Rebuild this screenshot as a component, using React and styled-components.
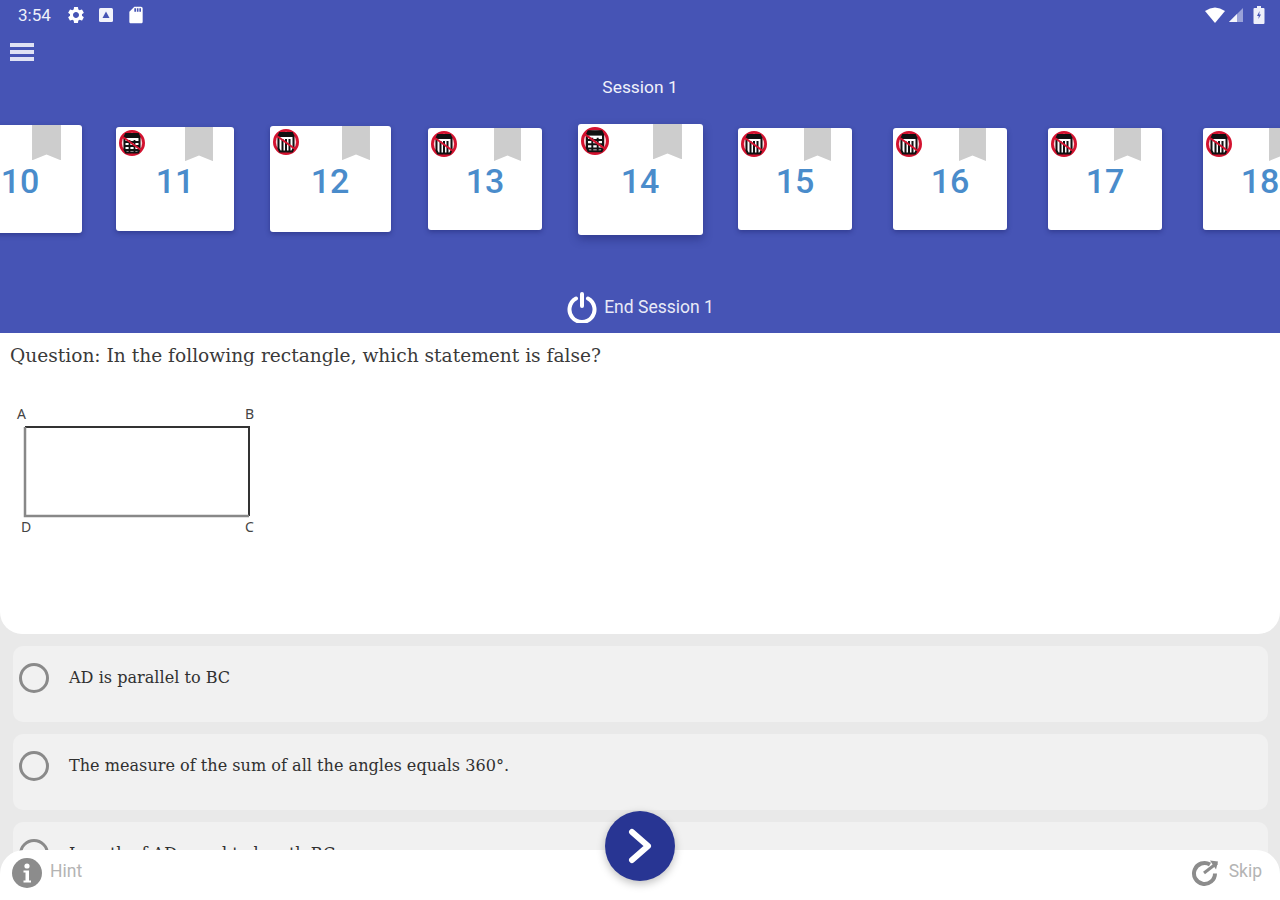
import React from "react";
import styled, { createGlobalStyle } from "styled-components";
import { MdSettings, MdSdCard } from "react-icons/md";

const GlobalStyle = createGlobalStyle`
  html, body {
    margin: 0;
    padding: 0;
    background: #e9e9e9;
    font-family: Roboto, "Liberation Sans", sans-serif;
  }
`;

const Page = styled.div`
  position: relative;
  width: 1280px;
  height: 900px;
  overflow: hidden;
  background: #e9e9e9;
`;

const Header = styled.header`
  display: flex;
  flex-direction: column;
  height: 333px;
  background: #4654b5;
  color: #fff;
`;

const StatusBar = styled.div`
  display: flex;
  align-items: center;
  height: 30px;
  padding: 0 15px 0 18px;
  font-size: 17px;
`;

const StatusTime = styled.span`
  width: 43px;
  color: #eef0fa;
`;

const StatusIcon = styled.span`
  display: flex;
  justify-content: center;
  width: 30px;
`;

const StatusRight = styled.div`
  display: flex;
  align-items: center;
  gap: 4px;
  margin-left: auto;
`;

const BatteryGap = styled.span`
  width: 2px;
`;

const MenuRow = styled.div`
  display: flex;
  align-items: center;
  height: 42px;
  padding: 2px 0 0 10px;
  box-sizing: border-box;
`;

const Hamburger = styled.button`
  display: flex;
  flex-direction: column;
  gap: 3px;
  width: 24px;
  padding: 0;
  border: 0;
  background: none;
  span {
    height: 4px;
    background: #dfe2f4;
  }
`;

const SessionTitle = styled.div`
  height: 30px;
  line-height: 30px;
  text-align: center;
  font-size: 17.4px;
  color: #f0f1fa;
`;

const Carousel = styled.div`
  display: flex;
  justify-content: center;
  align-items: center;
  height: 154px;
  overflow: hidden;
`;

const Slot = styled.div`
  flex: 0 0 155px;
  display: flex;
  justify-content: center;
  align-items: center;
`;

const Card = styled.div`
  position: relative;
  flex: none;
  display: flex;
  justify-content: center;
  align-items: center;
  width: ${(p) => p.$w}px;
  height: ${(p) => p.$h}px;
  padding-top: 4px;
  box-sizing: border-box;
  border-radius: 3px;
  background: #fff;
  box-shadow: 0 ${(p) => (p.$active ? 4 : 2)}px ${(p) => (p.$active ? 10 : 5)}px rgba(25, 32, 100, 0.45);
  color: #4a8ccb;
  font-size: 34px;
  font-weight: 500;
`;

const Bookmark = styled.svg`
  position: absolute;
  top: 0;
  right: 21px;
  width: ${(p) => p.$size}px;
  height: ${(p) => p.$size * 1.22}px;
`;

const CalcBadge = styled.svg`
  position: absolute;
  top: 3px;
  left: 3px;
  width: ${(p) => p.$size}px;
  height: ${(p) => p.$size}px;
`;

const EndSession = styled.div`
  display: flex;
  justify-content: center;
  align-items: center;
  gap: 6px;
  height: 52px;
  margin-top: 25px;
  font-size: 17.5px;
  color: #e8eaf7;
`;

const QuestionPanel = styled.section`
  height: 301px;
  padding: 9px 10px;
  box-sizing: border-box;
  background: #fff;
  border-radius: 0 0 22px 22px;
`;

const QuestionText = styled.p`
  margin: 0;
  font-family: "DejaVu Serif", "Liberation Serif", serif;
  font-size: 18.6px;
  line-height: 28px;
  color: #3a3a3a;
`;

const Diagram = styled.svg`
  display: block;
  width: 260px;
  height: 145px;
  margin-top: 33px;
  font-family: "Noto Sans", sans-serif;
  font-size: 14px;
  fill: #444;
`;

const Options = styled.div`
  display: flex;
  flex-direction: column;
  gap: 12px;
  padding: 12px 12px 0 13px;
`;

const Option = styled.label`
  display: flex;
  align-items: flex-start;
  flex: none;
  gap: 20px;
  height: 76px;
  padding: 17px 0 0 6px;
  box-sizing: border-box;
  border-radius: 10px;
  background: #f1f1f1;
  font-family: "DejaVu Serif", "Liberation Serif", serif;
  font-size: 16.1px;
  line-height: 30px;
  color: #303030;
`;

const Radio = styled.span`
  flex: none;
  width: 30px;
  height: 30px;
  box-sizing: border-box;
  border: 3px solid #8a8a8a;
  border-radius: 50%;
`;

const Footer = styled.footer`
  position: absolute;
  left: 0;
  right: 0;
  bottom: 0;
  display: flex;
  justify-content: space-between;
  align-items: center;
  height: 50px;
  padding: 0 18px 4px 12px;
  box-sizing: border-box;
  background: #fff;
  border-radius: 24px 24px 0 0;
`;

const FooterAction = styled.div`
  display: flex;
  align-items: center;
  gap: ${(p) => p.$gap}px;
  font-size: 17.5px;
  color: #b4b4b4;
`;

const FooterLabel = styled.span`
  margin-top: -4px;
`;

const NextButton = styled.button`
  position: absolute;
  left: 605px;
  top: 811px;
  display: flex;
  justify-content: center;
  align-items: center;
  width: 70px;
  height: 70px;
  padding: 0;
  border: 0;
  border-radius: 50%;
  background: #283593;
  color: #fff;
  box-shadow: 0 3px 8px rgba(0, 0, 0, 0.25);
`;

const cards = [
  { n: 10, w: 124, h: 108 },
  { n: 11, w: 118, h: 104, calc: "grid" },
  { n: 12, w: 121, h: 106, calc: "bars" },
  { n: 13, w: 114, h: 102, calc: "bars" },
  { n: 14, w: 125, h: 111, calc: "grid", active: true },
  { n: 15, w: 114, h: 102, calc: "bars" },
  { n: 16, w: 114, h: 102, calc: "bars" },
  { n: 17, w: 114, h: 102, calc: "bars" },
  { n: 18, w: 114, h: 102, calc: "bars" },
];

const options = [
  "AD is parallel to BC",
  "The measure of the sum of all the angles equals 360°.",
  "Length of AD equal to length BC",
];

const NoCalculator = ({ size, kind }) => (
  <CalcBadge $size={size} viewBox="0 0 26 26">
    <circle cx="13" cy="13" r="11.6" fill="#f8d5da" stroke="#d3122f" strokeWidth="2.8" />
    <path d="M7 4h12l1.5 3v12.5L19 22.5H7l-1.5-3V7z" fill="#fff" stroke="#111" strokeWidth="2" />
    <rect x="6" y="4" width="14" height="4" fill="#111" />
    {kind === "bars" ? (
      <path d="M9.5 10v12M13 10v12M16.5 10v12" stroke="#111" strokeWidth="2" />
    ) : (
      <path d="M6 12h14M6 16h14M6 20h14M10.5 10v12M15.5 10v12" stroke="#111" strokeWidth="1.8" />
    )}
    <path d="M4 7l18 13" stroke="#d3122f" strokeWidth="2" />
  </CalcBadge>
);

const DriveIcon = () => (
  <svg width="14" height="14" viewBox="0 0 14 14">
    <rect width="14" height="14" rx="1.5" fill="#f2f3fb" />
    <path d="M7 3.5L10.5 10h-7z" fill="#4654b5" />
  </svg>
);

const WifiIcon = () => (
  <svg width="20" height="16" viewBox="0 0 20 16">
    <path d="M0 4 Q10 -3 20 4 L10 16 Z" fill="#fff" />
  </svg>
);

const SignalIcon = () => (
  <svg width="14" height="14" viewBox="0 0 14 14">
    <path d="M14 0V14H0Z" fill="#9aa2d8" />
    <path d="M8 6V14H0Z" fill="#f4f5fb" />
  </svg>
);

const BatteryIcon = () => (
  <svg width="12" height="18" viewBox="0 0 12 18">
    <path d="M4 0h4v2h2.5a1 1 0 0 1 1 1v14a1 1 0 0 1-1 1h-9a1 1 0 0 1-1-1V3a1 1 0 0 1 1-1H4z" fill="#eef0fa" />
    <path d="M6.6 5L4 10h1.8l-.4 3L8 8.5H6.2z" fill="#4654b5" />
  </svg>
);

const PowerIcon = () => (
  <svg width="32" height="32" viewBox="0 0 32 32" fill="none" stroke="#fff" strokeWidth="4" strokeLinecap="round">
    <path d="M10 7.5a12.5 12.5 0 1 0 12 0" />
    <path d="M16 3v12" />
  </svg>
);

const HintIcon = () => (
  <svg width="30" height="30" viewBox="0 0 30 30">
    <circle cx="15" cy="15" r="15" fill="#8c8c8c" />
    <circle cx="15" cy="8" r="2.6" fill="#fff" />
    <path d="M11.5 12.5h5.5v10h2v2h-7.5v-2h2v-8h-2z" fill="#fff" />
  </svg>
);

const SkipIcon = () => (
  <svg width="30" height="30" viewBox="0 0 30 30" fill="none" stroke="#8c8c8c" strokeWidth="4">
    <path d="M19 6.5a10.5 10.5 0 1 0 5 9" />
    <path d="M13 15l13-10" strokeWidth="3" />
    <path d="M19 2.5l8 1-2 8z" fill="#8c8c8c" stroke="none" />
  </svg>
);

const ChevronIcon = () => (
  <svg width="28" height="36" viewBox="0 0 28 36" fill="none" stroke="#fff" strokeWidth="6" strokeLinecap="round" strokeLinejoin="round">
    <path d="M6 4l16 14L6 32" />
  </svg>
);

const App = () => (
  <Page>
    <GlobalStyle />
    <Header>
      <StatusBar>
        <StatusTime>3:54</StatusTime>
        <StatusIcon>
          <MdSettings size={20} color="#fff" />
        </StatusIcon>
        <StatusIcon>
          <DriveIcon />
        </StatusIcon>
        <StatusIcon>
          <MdSdCard size={20} color="#fff" />
        </StatusIcon>
        <StatusRight>
          <WifiIcon />
          <SignalIcon />
          <BatteryGap />
          <BatteryIcon />
        </StatusRight>
      </StatusBar>
      <MenuRow>
        <Hamburger aria-label="menu">
          <span />
          <span />
          <span />
        </Hamburger>
      </MenuRow>
      <SessionTitle>Session 1</SessionTitle>
      <Carousel>
        {cards.map((c) => (
          <Slot key={c.n}>
            <Card $w={c.w} $h={c.h} $active={c.active}>
              {c.calc && <NoCalculator size={c.active ? 28 : 26} kind={c.calc} />}
              <Bookmark $size={Math.round(c.w * 0.235)} viewBox="0 0 27 33">
                <path d="M0 0H27V33L13.5 27.5L0 33Z" fill="#cdcdcd" />
              </Bookmark>
              {c.n}
            </Card>
          </Slot>
        ))}
      </Carousel>
      <EndSession>
        <PowerIcon />
        End Session 1
      </EndSession>
    </Header>

    <QuestionPanel>
      <QuestionText>Question: In the following rectangle, which statement is false?</QuestionText>
      <Diagram viewBox="0 0 260 145">
        <text x="7" y="16">A</text>
        <text x="235" y="16">B</text>
        <text x="11" y="129">D</text>
        <text x="235" y="129">C</text>
        <path d="M15 24H239V113" fill="none" stroke="#333" strokeWidth="2" />
        <path d="M239 113H15V24" fill="none" stroke="#888" strokeWidth="2.5" />
      </Diagram>
    </QuestionPanel>

    <Options>
      {options.map((o) => (
        <Option key={o}>
          <Radio />
          {o}
        </Option>
      ))}
    </Options>

    <Footer>
      <FooterAction $gap={8}>
        <HintIcon />
        <FooterLabel>Hint</FooterLabel>
      </FooterAction>
      <FooterAction $gap={8}>
        <SkipIcon />
        <FooterLabel>Skip</FooterLabel>
      </FooterAction>
    </Footer>
    <NextButton aria-label="next">
      <ChevronIcon />
    </NextButton>
  </Page>
);

export default App;
